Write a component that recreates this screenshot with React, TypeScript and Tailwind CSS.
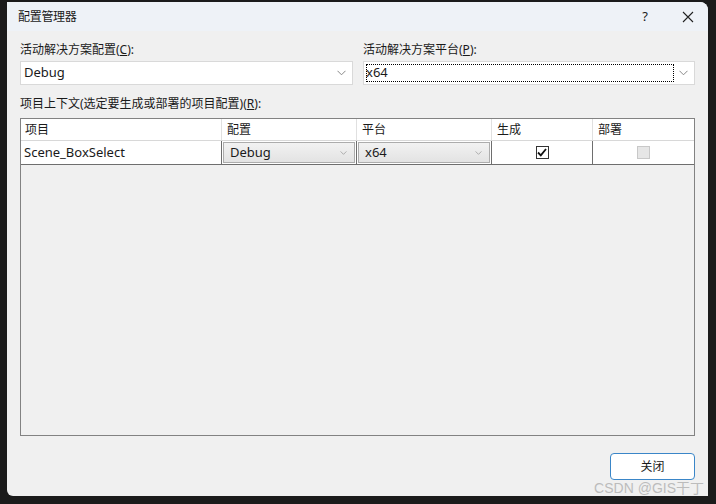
import React from 'react';

const font = { fontFamily: '"Noto Sans", "Noto Sans CJK SC", sans-serif' };

const Chevron = ({ className = '' }: { className?: string }) => (
  <svg width="9" height="6" viewBox="0 0 9 6" className={className}>
    <path d="M0.5 0.8 L4.5 4.8 L8.5 0.8" fill="none" stroke="currentColor" strokeWidth="1" />
  </svg>
);

export default function App() {
  return (
    <div className="w-[716px] h-[504px] bg-[#1b1b1b] pl-[7px] pr-[8px] pt-[2px] pb-[8px] text-[#1a1a1a]" style={font}>
      <div className="relative w-full h-full bg-[#f0f0f0] rounded-tr-[8px] rounded-bl-[6px] flex flex-col overflow-hidden">
        {/* Title bar */}
        <div className="h-[29px] bg-[#eef2f7] flex items-center pl-[11px] pr-[14px] shrink-0">
          <span className="text-[12px] tracking-tight">配置管理器</span>
          <span className="ml-auto text-[13px] mr-[34px]">?</span>
          <svg width="12" height="12" viewBox="0 0 12 12">
            <path d="M1 1 L11 11 M11 1 L1 11" stroke="#222" strokeWidth="1.1" />
          </svg>
        </div>

        {/* Body */}
        <div className="flex-1 flex flex-col px-[13px] pt-[8px]">
          <div className="flex gap-[10px]">
            <div className="flex-1 flex flex-col">
              <div className="text-[12px] h-[21px] leading-[21px]">
                活动解决方案配置(<span className="underline">C</span>):
              </div>
              <div className="mt-[1px] h-[24px] bg-white border border-[#d9d9d9] flex items-center pl-[3px] pr-[6px] text-[13px]">
                <span>Debug</span>
                <Chevron className="ml-auto text-[#888]" />
              </div>
            </div>
            <div className="w-[332px] flex flex-col">
              <div className="text-[12px] h-[21px] leading-[21px]">
                活动解决方案平台(<span className="underline">P</span>):
              </div>
              <div className="mt-[1px] h-[24px] bg-white border border-[#d9d9d9] flex items-center p-[2px] text-[13px]">
                <div className="flex-1 h-full border border-dotted border-black flex items-center">
                  <span className="-ml-[1px]">x64</span>
                </div>
                <div className="w-[18px] flex justify-center">
                  <Chevron className="text-[#888]" />
                </div>
              </div>
            </div>
          </div>

          <div className="mt-[9px] text-[12px] h-[20px] leading-[20px]">
            项目上下文(选定要生成或部署的项目配置)(<span className="underline">R</span>):
          </div>

          {/* Grid */}
          <div className="mt-[4px] h-[318px] border border-[#828282] bg-[#f0f0f0] flex flex-col text-[13px]">
            <div className="h-[22px] bg-white flex border-b border-[#d8d8d8] text-[12px]">
              <div className="w-[201px] border-r border-[#e0e0e0] pl-[4px] flex items-center">项目</div>
              <div className="w-[135px] border-r border-[#e0e0e0] pl-[5px] flex items-center">配置</div>
              <div className="w-[135px] border-r border-[#e0e0e0] pl-[5px] flex items-center">平台</div>
              <div className="w-[101px] border-r border-[#e0e0e0] pl-[5px] flex items-center">生成</div>
              <div className="flex-1 pl-[5px] flex items-center">部署</div>
            </div>
            <div className="h-[24px] bg-white flex border-b border-[#6e6e6e]">
              <div className="w-[201px] border-r border-[#6e6e6e] pl-[3px] flex items-center">Scene_BoxSelect</div>
              <div className="w-[135px] border-r border-[#6e6e6e] p-[1px]">
                <div className="h-full bg-gradient-to-b from-[#f2f2f2] to-[#e3e3e3] border border-[#acacac] flex items-center pl-[6px] pr-[6px]">
                  <span>Debug</span>
                  <Chevron className="ml-auto text-[#999] scale-75" />
                </div>
              </div>
              <div className="w-[135px] border-r border-[#6e6e6e] p-[1px]">
                <div className="h-full bg-gradient-to-b from-[#f2f2f2] to-[#e3e3e3] border border-[#acacac] flex items-center pl-[6px] pr-[6px]">
                  <span>x64</span>
                  <Chevron className="ml-auto text-[#999] scale-75" />
                </div>
              </div>
              <div className="w-[101px] border-r border-[#6e6e6e] flex items-center justify-center">
                <div className="w-[13px] h-[13px] border border-[#333] bg-white flex items-center justify-center">
                  <svg width="10" height="9" viewBox="0 0 10 9">
                    <path d="M1 4.5 L3.8 7.3 L9 1" fill="none" stroke="#111" strokeWidth="1.8" />
                  </svg>
                </div>
              </div>
              <div className="flex-1 flex items-center justify-center">
                <div className="w-[13px] h-[13px] border border-[#c8c8c8] bg-[#e6e6e6]" />
              </div>
            </div>
          </div>

          <div className="flex justify-end mt-[17px]">
            <button className="w-[85px] h-[27px] rounded-[4px] border border-[#3a86c8] bg-white text-[12px] flex items-center justify-center">
              关闭
            </button>
          </div>
        </div>

        <div className="absolute right-[4px] bottom-[0px] text-[14px] leading-[16px] text-[#bcbcbc]" style={{ fontFamily: '"Liberation Sans", "Noto Sans CJK SC", sans-serif' }}>
          CSDN @GIS干丁
        </div>
      </div>
    </div>
  );
}
